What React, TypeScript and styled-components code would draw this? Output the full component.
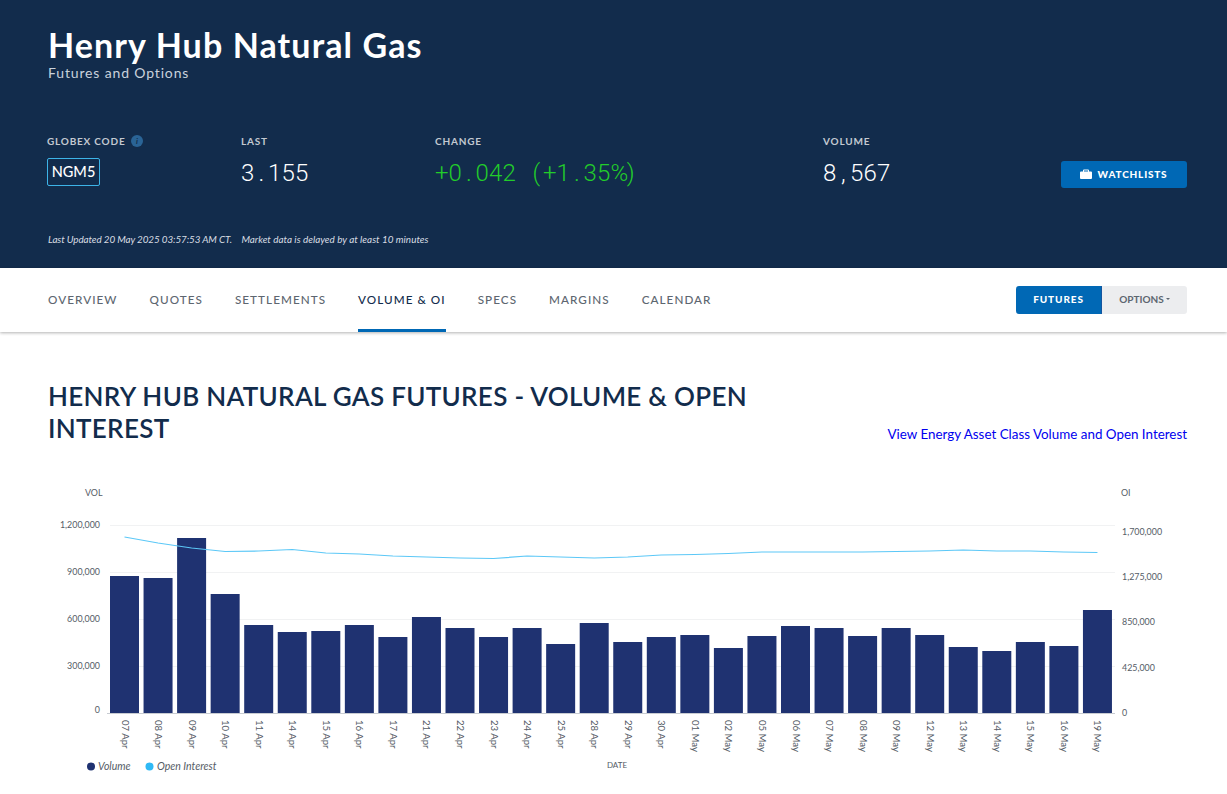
import React from "react";
import styled, { createGlobalStyle } from "styled-components";

const Global = createGlobalStyle`
  html, body { margin: 0; padding: 0; background: #fff; }
  body { font-family: "Lato", "Liberation Sans", sans-serif; width: 1227px; overflow: hidden; }
  * { box-sizing: border-box; }
`;

const Page = styled.div`
  width: 1227px;
  height: 794px;
  overflow: hidden;
`;
const Hero = styled.header`
  height: 268px;
  background: #122c4c;
  padding: 24px 40px 0 48px;
  color: #fff;
`;
const Title = styled.h1`
  margin: 0;
  font-size: 34px;
  line-height: 42px;
  font-weight: 700;
  letter-spacing: 1.1px;
`;
const Subtitle = styled.div`
  font-size: 14px;
  line-height: 16px;
  color: #c9d2dc;
  letter-spacing: 0.85px;
  margin-top: -1px;
`;
const Stats = styled.div`
  display: grid;
  grid-template-columns: 194px 194px 388px 238px 1fr;
  margin: 54px 0 0 -1px;
  height: 64px;
`;
const Stat = styled.div`
  display: flex;
  flex-direction: column;
`;
const Label = styled.div`
  display: flex;
  align-items: center;
  gap: 6px;
  height: 12px;
  font-size: 10px;
  font-weight: 700;
  letter-spacing: 0.8px;
  color: #c3c9d1;
`;
const InfoDot = styled.span`
  width: 12px;
  height: 12px;
  border-radius: 50%;
  background: #2a6496;
  color: #122c4c;
  font-size: 8px;
  font-style: italic;
  line-height: 12px;
  text-align: center;
`;
const Code = styled.div`
  margin-top: 11px;
  align-self: flex-start;
  height: 28px;
  width: 53px;
  border: 1px solid #3db4e8;
  border-radius: 2px;
  font-size: 14.5px;
  font-weight: 500;
  line-height: 26px;
  text-align: center;
`;
const Value = styled.div<{ $up?: boolean }>`
  margin-top: 11px;
  display: flex;
  font-family: "Roboto", sans-serif;
  font-weight: 300;
  font-size: 24px;
  line-height: 30px;
  font-variant-numeric: slashed-zero;
  color: ${(p) => (p.$up ? "#22cc2a" : "#fff")};
`;
const Glyph = styled.span`
  width: 13.5px;
  text-align: center;
`;
const WatchCell = styled.div`
  display: flex;
  justify-content: flex-end;
  padding-top: 26px;
`;
const Watch = styled.button`
  width: 126px;
  height: 27px;
  border: 0;
  border-radius: 3px;
  background: #0068b5;
  color: #fff;
  font: 900 10px "Lato", sans-serif;
  letter-spacing: 0.8px;
  display: flex;
  align-items: center;
  justify-content: center;
  gap: 6px;
  padding: 0 1px 2px 0;
`;
const Updated = styled.div`
  margin-top: 34px;
  display: flex;
  gap: 9.5px;
  font-size: 9.9px;
  line-height: 12px;
  font-style: italic;
  color: #d8dde3;
`;
const UpdatedTime = styled.span`
  letter-spacing: -0.1px;
`;
const UpdatedNote = styled.span`
  letter-spacing: 0.02px;
`;
const Nav = styled.nav`
  height: 64px;
  display: flex;
  align-items: stretch;
  justify-content: space-between;
  padding: 0 40px 0 48px;
  box-shadow: 0 1px 3px rgba(0, 0, 0, 0.3);
  position: relative;
`;
const Tabs = styled.div`
  display: flex;
  gap: 32px;
`;
const Tab = styled.div<{ $active?: boolean }>`
  font-size: 11.7px;
  font-weight: 500;
  letter-spacing: 1.05px;
  line-height: 63px;
  height: 64px;
  color: ${(p) => (p.$active ? "#122c4c" : "#5d6670")};
  border-bottom: 3px solid ${(p) => (p.$active ? "#0068b5" : "transparent")};
`;
const Toggle = styled.div`
  display: flex;
  margin-top: 18px;
  height: 28px;
`;
const ToggleBtn = styled.div<{ $on?: boolean }>`
  width: ${(p) => (p.$on ? 86 : 85)}px;
  height: 28px;
  border-radius: ${(p) => (p.$on ? "3px 0 0 3px" : "0 3px 3px 0")};
  background: ${(p) => (p.$on ? "#0068b5" : "#ecedef")};
  border-right: ${(p) => (p.$on ? "1px solid #14559f" : "0")};
  color: ${(p) => (p.$on ? "#fff" : "#5d6670")};
  font-size: 10px;
  font-weight: ${(p) => (p.$on ? 900 : 700)};
  letter-spacing: ${(p) => (p.$on ? "0.9px" : "0")};
  padding-bottom: 2px;
  display: flex;
  align-items: center;
  justify-content: center;
  gap: 2px;
`;
const Caret = styled.span`
  width: 0;
  height: 0;
  border: 2px solid transparent;
  border-top-color: #5d6670;
  border-bottom: 0;
`;
const Content = styled.main`
  padding: 48px 40px 0 48px;
`;
const HeadRow = styled.div`
  display: flex;
  justify-content: space-between;
  align-items: flex-end;
  height: 64px;
`;
const Heading = styled.h2`
  margin: 0;
  width: 760px;
  font-size: 26px;
  line-height: 32px;
  font-weight: 600;
  color: #122c4c;
  text-transform: uppercase;
  letter-spacing: 0.3px;
`;
const AssetLink = styled.a`
  font-size: 13.4px;
  line-height: 20px;
  color: #0000ee;
`;
const ChartWrap = styled.div`
  margin: 40px 0 0 -48px;
  width: 1227px;
`;

const dates = ["07 Apr","08 Apr","09 Apr","10 Apr","11 Apr","14 Apr","15 Apr","16 Apr","17 Apr","21 Apr","22 Apr","23 Apr","24 Apr","25 Apr","28 Apr","29 Apr","30 Apr","01 May","02 May","05 May","06 May","07 May","08 May","09 May","12 May","13 May","14 May","15 May","16 May","19 May"];
const tops = [576,578,538,594,625,632,631,625,637,617,628,637,628,644,623,642,637,635,648,636,626,628,636,628,635,647,651,642,646,610];
const line = [537,543,548,551.5,551,549.5,553,554,556,557,558,558.5,556,557,558,557,555,554.5,553.5,552,552,552,552,551.5,551,550,551,551,552,552.5];
const X0 = 110;
const STEP = 33.55;
const BASE = 713;
const leftTicks = [["1,200,000",525],["900,000",572],["600,000",619],["300,000",666],["0",710]] as const;
const rightTicks = [["1,700,000",532],["1,275,000",577],["850,000",622],["425,000",668],["0",713]] as const;
const font = "Lato, sans-serif";

const VolumeChart = () => (
  <svg width="1227" height="310" viewBox="0 484 1227 310" style={{ display: "block" }} fontFamily={font}>
    {[525, 572, 619, 666].map((y) => (
      <line key={y} x1="110" x2="1115" y1={y + 0.5} y2={y + 0.5} stroke="#f1f2f3" />
    ))}
    <line x1="107" x2="1115" y1="713.5" y2="713.5" stroke="#c8ccd2" />
    {tops.map((t, i) => (
      <rect key={i} x={X0 + i * STEP} y={t} width="29" height={BASE - t} fill="#1f3271" />
    ))}
    <polyline
      points={line.map((y, i) => `${X0 + 14.5 + i * STEP},${y}`).join(" ")}
      fill="none"
      stroke="#5cc8f7"
      strokeWidth="1.2"
    />
    <g fontSize="8.9" fill="#555c66">
      <text x="85" y="496">VOL</text>
      <text x="1121" y="496">OI</text>
      {leftTicks.map(([t, y]) => (
        <text key={t} x="100" y={y + 3} textAnchor="end">{t}</text>
      ))}
      {rightTicks.map(([t, y]) => (
        <text key={t} x="1122" y={y + 3}>{t}</text>
      ))}
      {dates.map((d, i) => {
        const x = X0 + 14.5 + i * STEP;
        return (
          <text key={d + i} fontSize="9.6" transform={`translate(${x - 3} 720) rotate(90)`}>{d}</text>
        );
      })}
      <text x="617" y="768" textAnchor="middle" fontSize="8">DATE</text>
      <circle cx="91" cy="766.5" r="4" fill="#1f3271" />
      <text x="98" y="770" fontSize="10.5" fontStyle="italic">Volume</text>
      <circle cx="149.500" cy="766.5" r="4" fill="#2fb9f5" />
      <text x="157" y="770" fontSize="10.5" fontStyle="italic">Open Interest</text>
    </g>
  </svg>
);

const Mono = ({ text, up }: { text: string; up?: boolean }) => (
  <Value $up={up}>
    {text.split("").map((c, i) => (
      <Glyph key={i}>{c}</Glyph>
    ))}
  </Value>
);

export default function App() {
  return (
    <Page>
      <Global />
      <Hero>
        <Title>Henry Hub Natural Gas</Title>
        <Subtitle>Futures and Options</Subtitle>
        <Stats>
          <Stat>
            <Label>GLOBEX CODE <InfoDot>i</InfoDot></Label>
            <Code>NGM5</Code>
          </Stat>
          <Stat>
            <Label>LAST</Label>
            <Mono text="3.155" />
          </Stat>
          <Stat>
            <Label>CHANGE</Label>
            <Mono text="+0.042 (+1.35%)" up />
          </Stat>
          <Stat>
            <Label>VOLUME</Label>
            <Mono text="8,567" />
          </Stat>
          <WatchCell>
            <Watch>
              <svg width="12" height="10" viewBox="0 0 12 10" fill="#fff">
                <path d="M4 0.5h4a1 1 0 0 1 1 1V2.500h2a1 1 0 0 1 1 1V9a1 1 0 0 1-1 1H1a1 1 0 0 1-1-1V3.500a1 1 0 0 1 1-1h2V1.500a1 1 0 0 1 1-1zM4 1.500v1h4v-1z" fillRule="evenodd" />
              </svg>
              WATCHLISTS
            </Watch>
          </WatchCell>
        </Stats>
        <Updated>
          <UpdatedTime>Last Updated 20 May 2025 03:57:53 AM CT.</UpdatedTime>
          <UpdatedNote>Market data is delayed by at least 10 minutes</UpdatedNote>
        </Updated>
      </Hero>
      <Nav>
        <Tabs>
          <Tab>OVERVIEW</Tab>
          <Tab>QUOTES</Tab>
          <Tab>SETTLEMENTS</Tab>
          <Tab $active>VOLUME &amp; OI</Tab>
          <Tab>SPECS</Tab>
          <Tab>MARGINS</Tab>
          <Tab>CALENDAR</Tab>
        </Tabs>
        <Toggle>
          <ToggleBtn $on>FUTURES</ToggleBtn>
          <ToggleBtn>OPTIONS<Caret /></ToggleBtn>
        </Toggle>
      </Nav>
      <Content>
        <HeadRow>
          <Heading>Henry Hub Natural Gas Futures - Volume &amp; Open Interest</Heading>
          <AssetLink>View Energy Asset Class Volume and Open Interest</AssetLink>
        </HeadRow>
        <ChartWrap>
          <VolumeChart />
        </ChartWrap>
      </Content>
    </Page>
  );
}
